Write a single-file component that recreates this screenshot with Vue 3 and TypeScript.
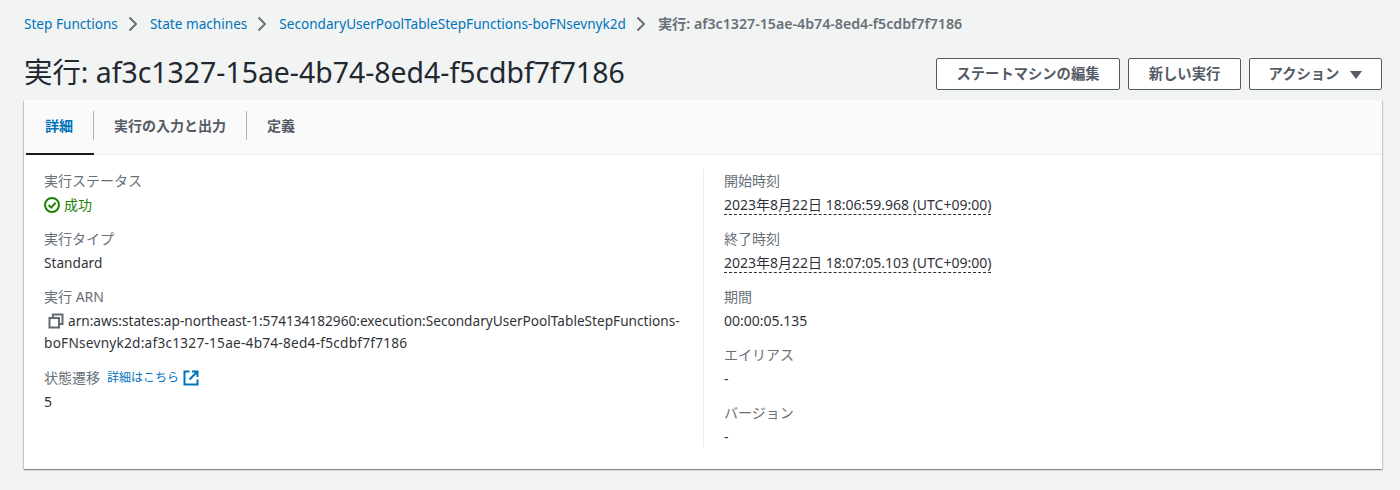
<script setup lang="ts">
interface Field { label: string; value: string; dotted?: boolean }
const crumbs: string[] = ['Step Functions', 'State machines', 'SecondaryUserPoolTableStepFunctions-boFNsevnyk2d']
const tabs: string[] = ['詳細', '実行の入力と出力', '定義']
const rightFields: Field[] = [
  { label: '開始時刻', value: '2023年8月22日 18:06:59.968 (UTC+09:00)', dotted: true },
  { label: '終了時刻', value: '2023年8月22日 18:07:05.103 (UTC+09:00)', dotted: true },
  { label: '期間', value: '00:00:05.135' },
  { label: 'エイリアス', value: '-' },
  { label: 'バージョン', value: '-' },
]
</script>

<template>
  <div class="page">
    <nav class="crumbs">
      <template v-for="c in crumbs" :key="c">
        <a class="crumb-link">{{ c }}</a>
        <svg class="chev" viewBox="0 0 16 16" width="16" height="16"><path d="M3.5 1.5 L10 8 L3.5 14.5" fill="none" stroke="#687078" stroke-width="2" /></svg>
      </template>
      <span class="crumb-cur">実行: af3c1327-15ae-4b74-8ed4-f5cdbf7f7186</span>
    </nav>

    <header class="head">
      <h1 class="title">実行: af3c1327-15ae-4b74-8ed4-f5cdbf7f7186</h1>
      <div class="actions">
        <button class="btn btn-edit">ステートマシンの編集</button>
        <button class="btn btn-new">新しい実行</button>
        <button class="btn btn-act">アクション<span class="caret"></span></button>
      </div>
    </header>

    <section class="card">
      <div class="tabs">
        <div v-for="(t, i) in tabs" :key="t" class="tab" :class="{ active: i === 0 }">
          <span class="tab-label">{{ t }}</span>
        </div>
      </div>
      <div class="body">
        <div class="col col-left">
          <div class="field">
            <div class="label">実行ステータス</div>
            <div class="value success">
              <svg viewBox="0 0 16 16" width="16" height="16"><circle cx="8" cy="8" r="7" fill="none" stroke="#1d8102" stroke-width="2" /><path d="M4.6 8 L7.2 10.6 L11.6 5.8" fill="none" stroke="#1d8102" stroke-width="2" /></svg>
              <span>成功</span>
            </div>
          </div>
          <div class="field">
            <div class="label">実行タイプ</div>
            <div class="value latin">Standard</div>
          </div>
          <div class="field">
            <div class="label">実行 ARN</div>
            <div class="value arn latin">
              <svg class="copy" viewBox="0 0 16 16" width="16" height="16"><path d="M5 4.5 V1.5 H14.5 V11 H11.5" fill="none" stroke="#545b64" stroke-width="2" /><rect x="1.5" y="5" width="9.5" height="9.5" fill="none" stroke="#545b64" stroke-width="2" /></svg>arn:aws:states:ap-northeast-1:574134182960:execution:SecondaryUserPoolTableStepFunctions-<span class="arn-tail">boFNsevnyk2d:af3c1327-15ae-4b74-8ed4-f5cdbf7f7186</span>
            </div>
          </div>
          <div class="field">
            <div class="label">状態遷移<a class="info">詳細はこちら<svg viewBox="0 0 16 16" width="16" height="16"><path d="M14.5 9.5 V14.5 H1.5 V1.5 H6.5" fill="none" stroke="#0073bb" stroke-width="2" /><path d="M9 1.5 H14.5 V7 M14.5 1.5 L6.5 9.5" fill="none" stroke="#0073bb" stroke-width="2" /></svg></a></div>
            <div class="value">5</div>
          </div>
        </div>
        <div class="col col-right">
          <div v-for="f in rightFields" :key="f.label" class="field">
            <div class="label">{{ f.label }}</div>
            <div class="value"><span :class="{ dotted: f.dotted }">{{ f.value }}</span></div>
          </div>
        </div>
      </div>
    </section>
  </div>
</template>

<style scoped>
.page {
  width: 1400px;
  height: 490px;
  box-sizing: border-box;
  padding: 12px 18px 0 24px;
  background: #f2f3f3;
  font-family: "Noto Sans", "Noto Sans CJK JP", sans-serif;
  font-size: 14px;
  line-height: 22px;
  color: #16191f;
  overflow: hidden;
}
.crumbs {
  display: flex;
  align-items: center;
  height: 24px;
  font-size: 13.6px;
}
.crumb-link { color: #0073bb; }
.chev { margin: 0 8px; }
.crumb-cur { color: #687078; font-weight: 600; font-size: 14.2px; }
.head {
  display: flex;
  justify-content: space-between;
  align-items: center;
  height: 64px;
}
.title {
  margin: 8px 0 0;
  font-size: 28.4px;
  line-height: 40px;
  font-weight: 400;
  color: #232730;
}
.actions {
  display: flex;
  gap: 8px;
  margin-top: 12px;
}
.btn {
  box-sizing: border-box;
  height: 32px;
  border: 1px solid #545b64;
  border-radius: 2px;
  background: #fff;
  color: #545b64;
  font-family: inherit;
  font-size: 14.3px;
  font-weight: 700;
  line-height: 22px;
  padding: 0;
}
.btn-edit { width: 184px; }
.btn-new { width: 113px; }
.btn-act { width: 133px; }
.caret {
  display: inline-block;
  width: 0;
  height: 0;
  margin-left: 11px;
  border-left: 6px solid transparent;
  border-right: 6px solid transparent;
  border-top: 8px solid #545b64;
}
.card {
  box-sizing: border-box;
  height: 369px;
  background: #fff;
  box-shadow: 0 1px 1px 0 rgba(0, 28, 36, 0.3), 1px 1px 1px 0 rgba(0, 28, 36, 0.15), -1px 1px 1px 0 rgba(0, 28, 36, 0.15);
}
.tabs {
  display: flex;
  height: 55px;
  box-sizing: border-box;
  padding-left: 2px;
  background: #fafafa;
  border-bottom: 1px solid #eaeded;
  align-items: stretch;
}
.tab {
  display: flex;
  align-items: center;
  padding-top: 11px;
  padding-bottom: 13px;
  margin-bottom: -1px;
  font-weight: 700;
  font-size: 14px;
  color: #545b64;
  border-bottom: 2px solid transparent;
  box-sizing: border-box;
}
.tab-label {
  display: flex;
  align-items: center;
  height: 100%;
  padding: 0 20px;
  border-right: 1px solid #aab7b8;
}
.tab:first-child .tab-label { padding: 0 20px 0 19px; }
.tab:last-child .tab-label { border-right: 0; }
.tab.active {
  color: #0073bb;
  border-bottom-color: #16191f;
}
.body {
  display: grid;
  grid-template-columns: 659px 1fr;
  padding: 14px 20px 0;
}
.col {
  display: flex;
  flex-direction: column;
  gap: 10px;
  height: 278px;
  box-sizing: border-box;
}
.col-left { padding-right: 14px; }
.col-right {
  padding-left: 20px;
  border-left: 1px solid #eaeded;
}
.field { min-height: 48px; }
.label {
  display: flex;
  align-items: center;
  height: 24px;
  color: #687078;
}
.value {
  line-height: 24px;
  min-height: 24px;
  color: #16191f;
  opacity: 0.9;
}
.latin { font-size: 13.65px; }
.success {
  display: flex;
  align-items: center;
  gap: 4px;
  color: #1d8102;
  opacity: 1;
}
.arn { line-height: 22px; padding-top: 1px; padding-bottom: 2px; }
.arn-tail { letter-spacing: 0.24px; }
.copy { margin: 0 4px 0 4px; vertical-align: -3px; }
.dotted { border-bottom: 1px dashed #16191f; }
.info {
  display: inline-flex;
  align-items: center;
  gap: 4px;
  margin-left: 7px;
  color: #0073bb;
  font-size: 12px;
}
</style>

<style>
html, body { margin: 0; background: #f2f3f3; }
</style>
